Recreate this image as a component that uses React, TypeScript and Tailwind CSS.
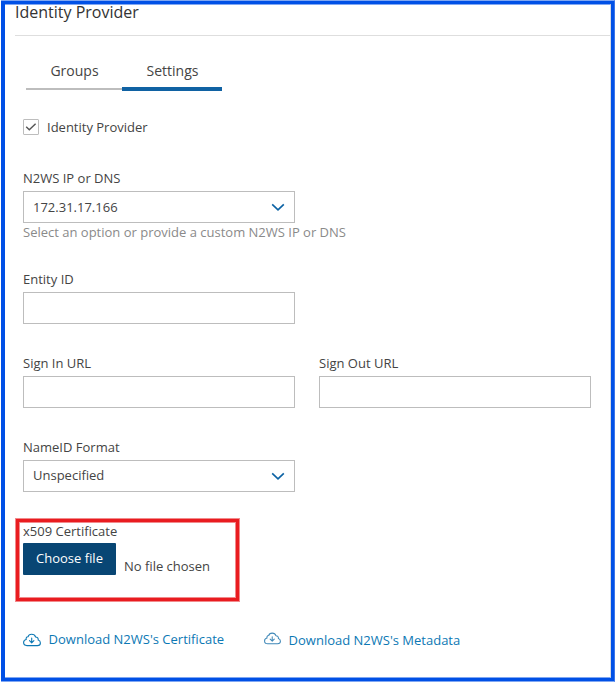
import { useState } from "react";

function Chevron() {
  return (
    <svg width="14" height="9" viewBox="0 0 14 9" fill="none" stroke="#0b62a4" strokeWidth="1.6">
      <path d="M1.2 1.3 L7 6.9 L12.8 1.3" />
    </svg>
  );
}

function CloudDownload({ className = "" }: { className?: string }) {
  return (
    <svg
      viewBox="0 0 18 14"
      preserveAspectRatio="none"
      fill="none"
      stroke="currentColor"
      strokeLinecap="round"
      strokeLinejoin="round"
      className={className}
    >
      <path d="M4 12.6 C2 12.6 .6 11.4 .6 9.6 C.6 8 1.7 6.8 3.2 6.5 C2.8 5 3.6 3.6 5 3.8 C5.4 2.1 6.8 1.2 8.6 1.2 C10.6 1.2 12.1 2.2 12.6 4 C14.4 4 15.5 5.3 15.2 7 C16.6 7.4 17.4 8.5 17.4 9.9 C17.4 11.6 16.2 12.6 14.4 12.6 Z" />
      <path d="M8.7 5 V9.6 M6.5 7.6 L8.7 9.8 L10.9 7.6" />
    </svg>
  );
}

function Select({ label, value, className = "" }: { label: string; value: string; className?: string }) {
  return (
    <div className="w-[272px]">
      <div className="h-[22px] leading-[18px]">{label}</div>
      <button className="flex h-8 w-full items-center justify-between border border-[#bdbdbd] px-[9px]">
        <span className={className}>{value}</span>
        <Chevron />
      </button>
    </div>
  );
}

function Field({ label }: { label: string }) {
  return (
    <label className="block w-[272px]">
      <div className="h-[22px] leading-[18px]">{label}</div>
      <input type="text" className="block h-8 w-full border border-[#bdbdbd] px-[9px] outline-none" />
    </label>
  );
}

export default function App() {
  const [enabled, setEnabled] = useState(true);
  return (
    <div className="h-[682px] w-[615px] bg-white pl-px font-['Open_Sans',sans-serif] text-[13px] text-[#444]">
      <div className="h-full border-y border-r border-y-[#80a7f2] border-r-[#3b75ea]">
        <div className="h-full border-[3px] border-l-4 border-[#0050e6]">
          <div className="relative h-full border-y border-r border-y-[#80a7f2] border-r-[#d5d9e2]">
            <h1 className="ml-[10px] h-[31px] border-b border-[#dedede] text-base leading-[14px] text-[#333]">
              Identity Provider
            </h1>
            <div className="ml-[21px] mt-[19px] flex h-9 items-start text-center text-sm leading-[32px]">
              <div className="h-[35px] w-24 border-b-2 border-[#bdbdbd] pl-px">Groups</div>
              <div className="h-9 w-[100px] border-b-4 border-[#1062a3] pl-px">Settings</div>
            </div>

            <div className="ml-[18px] mt-7">
              <button className="flex h-4 items-center" onClick={() => setEnabled(!enabled)}>
                <span className="flex h-4 w-4 items-center justify-center rounded-[1px] border border-[#bdbdbd]">
                  {enabled && (
                    <svg width="12" height="10" viewBox="0 0 12 10" fill="none" stroke="#555" strokeWidth="1.4">
                      <path d="M1.2 4.7 L4.3 7.7 L10.6 1.7" />
                    </svg>
                  )}
                </span>
                <span className="ml-2 pt-0.5">Identity Provider</span>
              </button>

              <div className="mt-[34px] h-[101px]">
                <Select label="N2WS IP or DNS" value="172.31.17.166" className="pt-0.5" />
                <div className="leading-[18px] text-[#8a8a8a]">
                  Select an option or provide a custom N2WS IP or DNS
                </div>
              </div>
              <div className="h-[84px]">
                <Field label="Entity ID" />
              </div>
              <div className="flex h-[84px] gap-6">
                <Field label="Sign In URL" />
                <Field label="Sign Out URL" />
              </div>
              <div className="h-[84px]">
                <Select label="NameID Format" value="Unspecified" />
              </div>

              <div className="h-[108px]">
                <div className="h-[21px] leading-[18px]">x509 Certificate</div>
                <div className="flex">
                  <button className="h-8 w-[93px] rounded-[1px] bg-[#084674] text-white">Choose file</button>
                  <span className="ml-2 mt-[14px] leading-[18px]">No file chosen</span>
                </div>
              </div>

              <div className="flex leading-[18px] text-[#0c78b4]">
                <a className="flex w-[241px]">
                  <CloudDownload className="mt-[3px] h-[14px] w-[18px] stroke-[1.1]" />
                  <span className="ml-[7.6px]">Download N2WS's Certificate</span>
                </a>
                <a className="flex">
                  <CloudDownload className="mt-[2px] h-[13px] w-[17px] text-[#3f88b8] stroke-[1.1]" />
                  <span className="ml-[7.6px] mt-px">Download N2WS's Metadata</span>
                </a>
              </div>
            </div>

            {/* highlight around the certificate picker */}
            <div className="pointer-events-none absolute left-[10px] top-[513px] h-[84px] w-[225px] border border-[#f28a8c]">
              <div className="h-full border-[3px] border-[#e91c20]">
                <div className="h-full border border-[#f28a8c]" />
              </div>
            </div>
          </div>
        </div>
      </div>
    </div>
  );
}
